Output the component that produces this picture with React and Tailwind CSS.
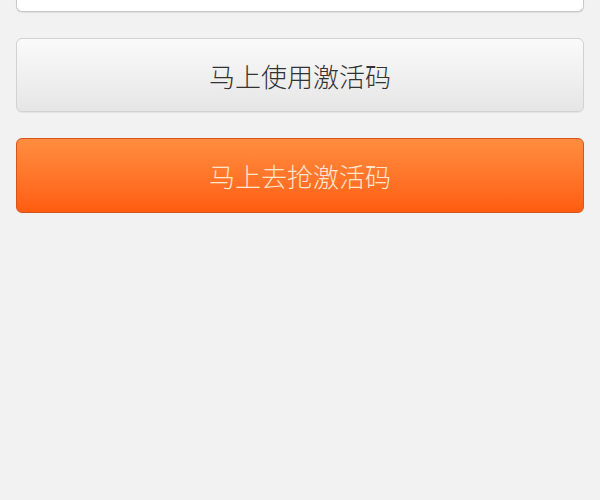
export default function App() {
  return (
    <div className="min-h-[500px] w-[600px] bg-[#f2f2f2] px-4 font-['Noto_Sans_CJK_SC','Noto_Sans',sans-serif]">
      <div className="flex flex-col gap-[26px]">
        <div className="h-[12px] rounded-b-md border-x border-b border-[#c8c8c8] bg-white shadow-[0_1px_1px_rgba(0,0,0,0.08)]" />
        <button
          type="button"
          className="flex h-[74px] items-center justify-center rounded-md border border-[#d2d2d2] bg-gradient-to-b from-[#fafafa] to-[#e6e6e6] text-[26px] font-light text-[#333] shadow-[0_1px_1px_rgba(0,0,0,0.06)]"
        >
          马上使用激活码
        </button>
        <button
          type="button"
          className="flex h-[75px] items-center justify-center rounded-md border border-[#d4561c] bg-gradient-to-b from-[#ff8d3e] to-[#ff5c0e] text-[26px] font-light text-[#fde6cc]"
        >
          马上去抢激活码
        </button>
      </div>
    </div>
  );
}
